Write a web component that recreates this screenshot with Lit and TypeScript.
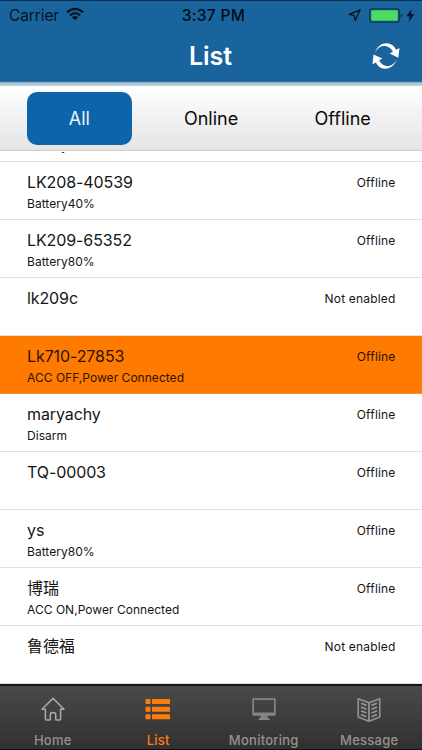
import { LitElement, html, css, svg } from "lit";
import { customElement, state } from "lit/decorators.js";
import { classMap } from "lit/directives/class-map.js";

interface Device {
  name: string;
  info: string;
  status: string;
  selected?: boolean;
}

const devices: Device[] = [
  { name: "LK208-40538", info: "Battery40%", status: "Offline" },
  { name: "LK208-40539", info: "Battery40%", status: "Offline" },
  { name: "LK209-65352", info: "Battery80%", status: "Offline" },
  { name: "lk209c", info: "", status: "Not enabled" },
  { name: "Lk710-27853", info: "ACC OFF,Power Connected", status: "Offline", selected: true },
  { name: "maryachy", info: "Disarm", status: "Offline" },
  { name: "TQ-00003", info: "", status: "Offline" },
  { name: "ys", info: "Battery80%", status: "Offline" },
  { name: "博瑞", info: "ACC ON,Power Connected", status: "Offline" },
  { name: "鲁德福", info: "", status: "Not enabled" },
];

const tabs = [
  {
    label: "Home",
    icon: svg`<path d="M2 13.200 13 2.200l11 11h-3.400v9.900q0 .9-.9.900h-3.200q-.8 0-.8-.8v-4.400q0-2.200-2.200-2.200h-1q-2.200 0-2.200 2.200v4.400q0 .8-.8.8H6.300q-.9 0-.9-.9v-9.900Z" fill="none" stroke="#a8a8a8" stroke-width="1.600" stroke-linejoin="round"/>`,
  },
  {
    label: "List",
    icon: svg`<g fill="currentColor"><rect x="0.500" y="3" width="5" height="5" rx="1"/><rect x="7" y="3" width="18" height="5" rx=".5"/><rect x="0.500" y="10.700" width="5" height="5" rx="1"/><rect x="7" y="10.700" width="18" height="5" rx=".5"/><rect x="0.500" y="18.300" width="5" height="5" rx="1"/><rect x="7" y="18.300" width="18" height="5" rx=".5"/></g>`,
  },
  {
    label: "Monitoring",
    icon: svg`<path fill="#858585" fill-rule="evenodd" d="M2.200 2.200h21.600q.9 0 .9.900v15.700q0 .9-.9.900h-7.200v2.400h1.300q.7 0 .7 1v.9H7.700v-.9q0-1 .7-1h1.300v-2.400H2.200q-.9 0-.9-.9V3.100q0-.9.9-.9ZM3 4v12.500h20V4Z"/>`,
  },
  {
    label: "Message",
    icon: svg`<g fill="none" stroke="currentColor"><path stroke-width="1.600" stroke-linejoin="round" d="M2.200 2.700 13 6.800l10.800-4.100V21L13 25.200 2.200 21Z"/><path stroke-width="1.800" d="M13 6.500v18.500"/><path stroke-width="1.700" d="m5 7.300 5.500 2.100M5 11.100l5.500 2.100M5 14.900 10.500 17M5 18.600l5.500 2.100M21 7.300l-5.500 2.100M21 11.100l-5.500 2.100M21 14.900 15.500 17M21 18.600l-5.500 2.100"/></g>`,
  },
];

@customElement("status-bar")
class StatusBar extends LitElement {
  static styles = css`
    :host {
      display: grid;
      grid-template-columns: 1fr auto 1fr;
      align-items: center;
      height: 28px;
      padding: 0 7px 0 9px;
      box-sizing: border-box;
      color: #06121f;
      font-size: 15.5px;
    }
    .left { display: flex; align-items: center; gap: 7px; letter-spacing: -0.1px; }
    .time { font-weight: 500; letter-spacing: 0.3px; padding-left: 3px; color: #020c18; }
    .right { display: flex; align-items: center; justify-content: flex-end; }
    svg { display: block; }
    .wifi { margin-top: -2px; }
    .arrow { margin-right: 8px; }
    .bolt { margin-left: 2px; }
  `;

  render() {
    return html`
      <div class="left">
        <span>Carrier</span>
        <svg class="wifi" width="18" height="14" viewBox="0 0 19 14">
          <g fill="none" stroke="currentColor" stroke-width="2.300">
            <path d="M1 5.300Q9.500-2.300 18 5.300"/><path d="M4.100 8.400Q9.500 3.600 14.900 8.400"/>
          </g>
          <path fill="currentColor" d="M6.300 10.300q3.200-2.500 6.400 0L9.500 13.500Z"/>
        </svg>
      </div>
      <div class="time">3:37 PM</div>
      <div class="right">
        <svg class="arrow" width="13" height="13" viewBox="0 0 13 13">
          <path d="M12.100.9 1.200 5.300l5 1.300 1 5Z" fill="none" stroke="currentColor" stroke-width="1.300" stroke-linejoin="round"/>
        </svg>
        <svg width="35" height="15" viewBox="0 0 35 15">
          <rect x=".8" y=".8" width="29.400" height="13.400" rx="2.500" fill="#1a6399" stroke="#0c3557" stroke-width="1.300"/>
          <rect x="2.200" y="2.300" width="26.600" height="10.400" rx="1" fill="#4cdb62"/>
          <path d="M31.700 5.200q1.700.7 1.700 2.300t-1.700 2.300Z" fill="#0c3557"/>
        </svg>
        <svg class="bolt" width="9" height="13" viewBox="0 0 9 13">
          <path fill="currentColor" d="M5.600.2.400 7.200h3.200L2.800 12.800l5.600-7.500H5Z"/>
        </svg>
      </div>
    `;
  }
}

@customElement("device-row")
class DeviceRow extends LitElement {
  static properties = { device: { attribute: false } };
  declare device: Device;

  static styles = css`
    :host { display: block; flex: none; }
    .row {
      display: flex;
      justify-content: space-between;
      height: 58px;
      box-sizing: border-box;
      padding: 9px 26.5px 0 27px;
      border-bottom: 1px solid #e1e1e1;
      color: #151515;
    }
    .selected { background: #ff7a00; border-color: #ee9040; color: #2b1300; }
    .name { font-size: 16px; line-height: 22px; letter-spacing: -0.1px; }
    .info { font-size: 12px; line-height: 22px; letter-spacing: 0.03px; }
    .status { font-size: 12px; line-height: 24px; letter-spacing: 0.18px; }
  `;

  render() {
    const d = this.device;
    return html`
      <div class=${classMap({ row: true, selected: !!d.selected })}>
        <div>
          <div class="name">${d.name}</div>
          <div class="info">${d.info}</div>
        </div>
        <div class="status">${d.status}</div>
      </div>
    `;
  }
}

@customElement("app-root")
class AppRoot extends LitElement {
  @state() filter = "All";
  @state() tab = "List";

  static styles = css`
    :host {
      display: flex;
      flex-direction: column;
      height: 750px;
      overflow: hidden;
      background: #fff;
      font-family: Inter, "Noto Sans CJK SC", sans-serif;
    }
    header {
      flex: none;
      height: 86px;
      box-sizing: border-box;
      border-top: 1px solid #0b2c4e;
      background: linear-gradient(#19649d 0 79px, #15588f 80px, #5d93b9 81px, #a9c5d5 82px, #c0d2dc 85px);
    }
    .title-bar {
      display: grid;
      grid-template-columns: 1fr auto 1fr;
      align-items: center;
      height: 54px;
      padding: 0 21px 0 20px;
    }
    h1 {
      grid-column: 2;
      margin: 0 0 1px;
      color: #fff;
      font-size: 25px;
      line-height: 30px;
      font-weight: 600;
    }
    .refresh {
      justify-self: end;
      padding: 0;
      border: 0;
      background: none;
      color: #fff;
    }
    .refresh svg { display: block; }
    .filters {
      flex: none;
      display: flex;
      align-items: flex-start;
      height: 65px;
      box-sizing: border-box;
      padding: 6px 13.5px 0;
      border-bottom: 1px solid #cfcfcf;
      background: linear-gradient(#fff, #e4e4e4);
    }
    .filters button {
      flex: 1;
      height: 53px;
      margin: 0 13px;
      padding: 0;
      border: 0;
      border-radius: 10px;
      background: none;
      color: #0a0a0a;
      font: 18px/53px Inter, sans-serif;
    }
    .filters .active { background: #0c64aa; color: #e9f2f9; }
    .list {
      flex: 1;
      min-height: 0;
      overflow: hidden;
      display: flex;
      flex-direction: column;
    }
    .list device-row:first-child { margin-top: -47px; }
    .list::before {
      content: "";
      flex: none;
      position: relative;
      z-index: 1;
      height: 1px;
      margin-bottom: -1px;
      background: #fff;
    }
    nav {
      flex: none;
      display: grid;
      grid-template-columns: repeat(4, 105.5px);
      height: 66px;
      box-sizing: border-box;
      border-top: 2px solid #161616;
      border-bottom: 1px solid #111;
      background: linear-gradient(#4a4a4a, #313131);
    }
    .tab {
      display: flex;
      flex-direction: column;
      align-items: center;
      padding-top: 10px;
      color: #929292;
      font-size: 13px;
      line-height: 16px;
      font-weight: 500;
      letter-spacing: 0.25px;
    }
    .tab svg { display: block; margin-bottom: 10px; }
    .tab.current { color: #ff7d0d; }
  `;

  render() {
    return html`
      <header>
        <status-bar></status-bar>
        <div class="title-bar">
          <h1>List</h1>
          <button class="refresh" aria-label="Refresh">
            <svg width="30" height="28" viewBox="0 0 30 28">
              <g fill="currentColor">
                <path d="M4.200 10.400C6 4.200 11 .9 16 1.200c4.300.3 7.500 3 9.100 6.600L28.500 6l-1.200 9.800L18.700 11.500l3.200-1.800C20.300 6.400 17.200 3.900 13.100 3.900 9.200 3.900 6.200 6.400 4.200 10.400Z"/>
                <path d="M25.600 17.600c-1.800 6.200-6.800 9.500-11.800 9.200-4.300-.3-7.300-2.800-8.900-6.400L1.500 22.200l1-9.800 8.800 4.100-3.200 1.800c1.600 3.300 4.500 5.800 8.600 5.800 3.900 0 6.900-2.500 8.900-6.500Z"/>
              </g>
            </svg>
          </button>
        </div>
      </header>
      <div class="filters">
        ${["All", "Online", "Offline"].map(
          (f) => html`<button class=${classMap({ active: f === this.filter })} @click=${() => (this.filter = f)}>${f}</button>`
        )}
      </div>
      <div class="list">${devices.map((d) => html`<device-row .device=${d}></device-row>`)}</div>
      <nav>
        ${tabs.map(
          (t) => html`
            <div class=${classMap({ tab: true, current: t.label === this.tab })} @click=${() => (this.tab = t.label)}>
              <svg width="26" height="26" viewBox="0 0 26 26">${t.icon}</svg>
              <span>${t.label}</span>
            </div>
          `
        )}
      </nav>
    `;
  }
}
